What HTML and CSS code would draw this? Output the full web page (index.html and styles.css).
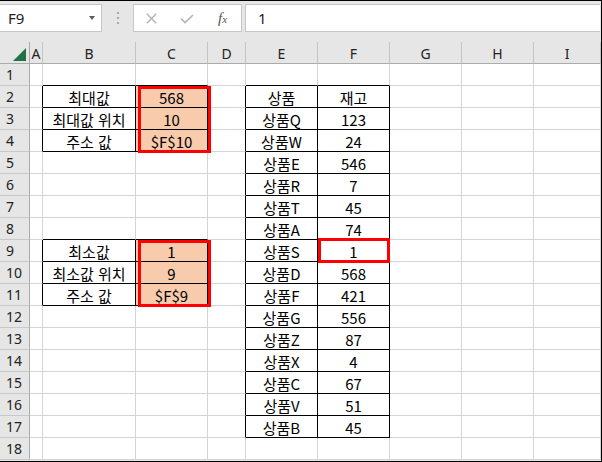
FILE: index.html
```html
<!DOCTYPE html>
<html lang="ko">
<head>
<meta charset="utf-8">
<title>Sheet</title>
<link rel="stylesheet" href="styles.css">
</head>
<body>
<div class="frame">
  <div class="fbar">
    <div class="namebox"><span class="name">F9</span><span class="arrow"></span></div>
    <div class="dots"><i></i><i></i><i></i></div>
    <div class="fxbox">
      <svg class="ic-x" width="11" height="11" viewBox="0 0 11 11"><path d="M0.8 0.8 L10.2 10.2 M10.2 0.8 L0.8 10.2" stroke="#b4b4b4" stroke-width="1.5" fill="none"/></svg>
      <svg class="ic-ok" width="14" height="10" viewBox="0 0 14 10"><path d="M1 4.5 L5 8.5 L13 1" stroke="#b4b4b4" stroke-width="1.7" fill="none"/></svg>
      <span class="fx"><span class="f">f</span><span class="xx">x</span></span>
    </div>
    <div class="input">1</div>
  </div>
  <div class="sheet">
    <div class="corner"><svg width="13" height="13" viewBox="0 0 13 13"><path d="M13 0 L13 13 L0 13 Z" fill="#217346"/></svg></div>
    <div class="h">A</div><div class="h">B</div><div class="h">C</div><div class="h">D</div><div class="h">E</div><div class="h">F</div><div class="h">G</div><div class="h">H</div><div class="h">I</div>

    <div class="r">1</div><div class="c"></div><div class="c bb"></div><div class="c bb"></div><div class="c"></div><div class="c bb"></div><div class="c bb"></div><div class="c"></div><div class="c"></div><div class="c"></div>
    <div class="r">2</div><div class="c br"></div><div class="c t">최대값</div><div class="c t o anchor">568<div class="redbox range"></div></div><div class="c br"></div><div class="c t">상품</div><div class="c t">재고</div><div class="c"></div><div class="c"></div><div class="c"></div>
    <div class="r">3</div><div class="c br"></div><div class="c t">최대값 위치</div><div class="c t o">10</div><div class="c br"></div><div class="c t">상품Q</div><div class="c t">123</div><div class="c"></div><div class="c"></div><div class="c"></div>
    <div class="r">4</div><div class="c br"></div><div class="c t">주소 값</div><div class="c t o">$F$10</div><div class="c br"></div><div class="c t">상품W</div><div class="c t">24</div><div class="c"></div><div class="c"></div><div class="c"></div>
    <div class="r">5</div><div class="c"></div><div class="c"></div><div class="c"></div><div class="c br"></div><div class="c t">상품E</div><div class="c t">546</div><div class="c"></div><div class="c"></div><div class="c"></div>
    <div class="r">6</div><div class="c"></div><div class="c"></div><div class="c"></div><div class="c br"></div><div class="c t">상품R</div><div class="c t">7</div><div class="c"></div><div class="c"></div><div class="c"></div>
    <div class="r">7</div><div class="c"></div><div class="c"></div><div class="c"></div><div class="c br"></div><div class="c t">상품T</div><div class="c t">45</div><div class="c"></div><div class="c"></div><div class="c"></div>
    <div class="r">8</div><div class="c"></div><div class="c bb"></div><div class="c bb"></div><div class="c br"></div><div class="c t">상품A</div><div class="c t">74</div><div class="c"></div><div class="c"></div><div class="c"></div>
    <div class="r">9</div><div class="c br"></div><div class="c t">최소값</div><div class="c t o anchor">1<div class="redbox range"></div></div><div class="c br"></div><div class="c t">상품S</div><div class="c t anchor">1<div class="redbox sel"></div></div><div class="c"></div><div class="c"></div><div class="c"></div>
    <div class="r">10</div><div class="c br"></div><div class="c t">최소값 위치</div><div class="c t o">9</div><div class="c br"></div><div class="c t">상품D</div><div class="c t">568</div><div class="c"></div><div class="c"></div><div class="c"></div>
    <div class="r">11</div><div class="c br"></div><div class="c t">주소 값</div><div class="c t o">$F$9</div><div class="c br"></div><div class="c t">상품F</div><div class="c t">421</div><div class="c"></div><div class="c"></div><div class="c"></div>
    <div class="r">12</div><div class="c"></div><div class="c"></div><div class="c"></div><div class="c br"></div><div class="c t">상품G</div><div class="c t">556</div><div class="c"></div><div class="c"></div><div class="c"></div>
    <div class="r">13</div><div class="c"></div><div class="c"></div><div class="c"></div><div class="c br"></div><div class="c t">상품Z</div><div class="c t">87</div><div class="c"></div><div class="c"></div><div class="c"></div>
    <div class="r">14</div><div class="c"></div><div class="c"></div><div class="c"></div><div class="c br"></div><div class="c t">상품X</div><div class="c t">4</div><div class="c"></div><div class="c"></div><div class="c"></div>
    <div class="r">15</div><div class="c"></div><div class="c"></div><div class="c"></div><div class="c br"></div><div class="c t">상품C</div><div class="c t">67</div><div class="c"></div><div class="c"></div><div class="c"></div>
    <div class="r">16</div><div class="c"></div><div class="c"></div><div class="c"></div><div class="c br"></div><div class="c t">상품V</div><div class="c t">51</div><div class="c"></div><div class="c"></div><div class="c"></div>
    <div class="r">17</div><div class="c"></div><div class="c"></div><div class="c"></div><div class="c br"></div><div class="c t">상품B</div><div class="c t">45</div><div class="c"></div><div class="c"></div><div class="c"></div>
    <div class="r">18</div><div class="c"></div><div class="c"></div><div class="c"></div><div class="c"></div><div class="c"></div><div class="c"></div><div class="c"></div><div class="c"></div><div class="c"></div>
  </div>
</div>
</body>
</html>
```
FILE: styles.css
```css
* { box-sizing: border-box; margin: 0; padding: 0; }
body { margin: 0; background: #fff; }

.frame {
  width: 602px;
  height: 462px;
  border-top: 1px solid #000;
  border-right: 1px solid #000;
  border-bottom: 1px solid #000;
  background: #e6e6e6;
  display: flex;
  flex-direction: column;
  overflow: hidden;
}

/* formula bar */
.fbar {
  height: 41px;
  flex: none;
  display: flex;
  align-items: flex-start;
  padding-top: 3px;
}
.namebox {
  width: 102px;
  height: 28px;
  background: #fff;
  border: 1px solid #c6c6c6;
  border-left: none;
  display: flex;
  align-items: center;
  padding-left: 8px;
  font: 15px "Noto Sans", sans-serif;
  color: #222;
}
.arrow {
  margin-left: auto;
  margin-right: 6px;
  width: 0;
  height: 0;
  border-left: 3.5px solid transparent;
  border-right: 3.5px solid transparent;
  border-top: 4px solid #5a5a5a;
}
.dots {
  width: 31px;
  height: 28px;
  display: flex;
  flex-direction: column;
  align-items: center;
  justify-content: center;
  gap: 3px;
}
.dots i {
  display: block;
  width: 2px;
  height: 2px;
  background: #a8a8a8;
}
.fxbox {
  width: 109px;
  height: 28px;
  background: #fff;
  border: 1px solid #c6c6c6;
  display: flex;
  align-items: center;
}
.ic-x { margin-left: 12px; }
.ic-ok { margin-left: 23px; margin-top: 1px; }
.fx {
  margin-left: 24px;
  font-family: "Liberation Serif", serif;
  font-style: italic;
  color: #555;
  line-height: 1;
}
.fx .f { font-size: 15px; }
.fx .xx { font-size: 11px; }
.input {
  flex: 1;
  margin-left: 3px;
  margin-right: 1px;
  height: 28px;
  background: #fff;
  border: 1px solid #c6c6c6;
  border-right: none;
  display: flex;
  align-items: center;
  padding-left: 12px;
  font: 15px "Noto Sans", sans-serif;
  color: #222;
}

/* sheet grid */
.sheet {
  flex: none;
  display: grid;
  grid-template-columns: 30px 13px 93px 72px 38px 72px 72px 72px 72px 67px;
  grid-template-rows: repeat(19, 22px);
  background: #fff;
}
.corner {
  background: #e6e6e6;
  border-right: 1px solid #ababab;
  border-bottom: 1px solid #ababab;
  display: flex;
  justify-content: flex-end;
  align-items: flex-end;
  padding: 0 3px 2px 0;
}
.h {
  background: #e6e6e6;
  border-right: 1px solid #c4c4c4;
  border-bottom: 1px solid #ababab;
  display: flex;
  align-items: center;
  justify-content: center;
  font: 14px "Noto Sans", sans-serif;
  color: #222;
  padding-top: 1px;
}
.r {
  background: #e6e6e6;
  border-right: 1px solid #ababab;
  border-bottom: 1px solid #c8c8c8;
  display: flex;
  align-items: center;
  padding-left: 6px;
  font: 14px "Noto Sans", sans-serif;
  color: #222;
}
.c {
  border-right: 1px solid #d4d4d4;
  border-bottom: 1px solid #d4d4d4;
  display: flex;
  align-items: center;
  justify-content: center;
  white-space: nowrap;
  font: 15px "Noto Sans CJK KR", sans-serif;
  color: #000;
  padding-top: 1px;
}
.c.bb { border-bottom-color: #000; }
.c.br { border-right-color: #000; }
.c.t { border-right-color: #000; border-bottom-color: #000; }
.c.o { background: #f8cbad; }
.c.anchor { position: relative; }

.redbox {
  position: absolute;
  border: 3px solid #ff0000;
  pointer-events: none;
  z-index: 2;
}
.redbox.range { top: 0; left: 2px; width: 73px; height: 67px; }
.redbox.sel { top: -2px; left: 0; width: 72px; height: 25px; }
```
